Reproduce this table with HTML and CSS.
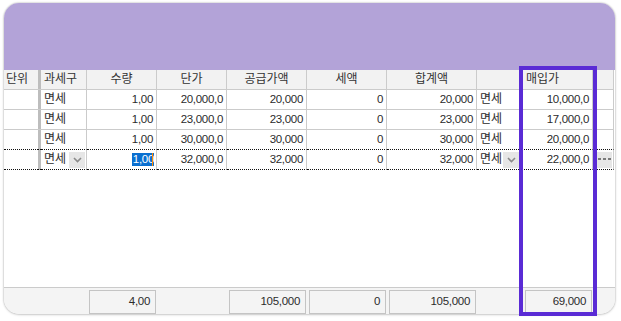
FILE: index.html
```html
<!DOCTYPE html>
<html lang="ko">
<head>
<meta charset="utf-8">
<link rel="stylesheet" href="styles.css">
</head>
<body>
<div class="card">
  <div class="banner"></div>
  <div class="grid">
    <div class="row head">
      <div class="c c1 left">단위</div><div class="frz"></div>
      <div class="c c2 left">과세구</div>
      <div class="c c3">수량</div>
      <div class="c c4">단가</div>
      <div class="c c5">공급가액</div>
      <div class="c c6">세액</div>
      <div class="c c7">합계액</div>
      <div class="c c8"></div>
      <div class="c c9 left">매입가</div>
      <div class="c c10"></div>
    </div>
    <div class="row">
      <div class="c c1"></div><div class="frz"></div>
      <div class="c c2 left">면세</div>
      <div class="c c3 num">1,00</div>
      <div class="c c4 num">20,000,0</div>
      <div class="c c5 num">20,000</div>
      <div class="c c6 num">0</div>
      <div class="c c7 num">20,000</div>
      <div class="c c8 left">면세</div>
      <div class="c c9 num">10,000,0</div>
      <div class="c c10"></div>
    </div>
    <div class="row">
      <div class="c c1"></div><div class="frz"></div>
      <div class="c c2 left">면세</div>
      <div class="c c3 num">1,00</div>
      <div class="c c4 num">23,000,0</div>
      <div class="c c5 num">23,000</div>
      <div class="c c6 num">0</div>
      <div class="c c7 num">23,000</div>
      <div class="c c8 left">면세</div>
      <div class="c c9 num">17,000,0</div>
      <div class="c c10"></div>
    </div>
    <div class="row prev">
      <div class="c c1"></div><div class="frz"></div>
      <div class="c c2 left">면세</div>
      <div class="c c3 num">1,00</div>
      <div class="c c4 num">30,000,0</div>
      <div class="c c5 num">30,000</div>
      <div class="c c6 num">0</div>
      <div class="c c7 num">30,000</div>
      <div class="c c8 left">면세</div>
      <div class="c c9 num">20,000,0</div>
      <div class="c c10"></div>
    </div>
    <div class="row cur">
      <div class="c c1"></div><div class="frz"></div>
      <div class="c c2 left combo"><span>면세</span><span class="dd"><svg width="9" height="6" viewBox="0 0 9 6"><polyline points="1,1 4.5,4.5 8,1" fill="none" stroke="#8a8a8a" stroke-width="1.6"/></svg></span></div>
      <div class="c c3 num"><span class="sel">1,00</span><span class="caret"></span></div>
      <div class="c c4 num">32,000,0</div>
      <div class="c c5 num">32,000</div>
      <div class="c c6 num">0</div>
      <div class="c c7 num">32,000</div>
      <div class="c c8 left combo"><span>면세</span><span class="dd"><svg width="9" height="6" viewBox="0 0 9 6"><polyline points="1,1 4.5,4.5 8,1" fill="none" stroke="#8a8a8a" stroke-width="1.6"/></svg></span></div>
      <div class="c c9 num">22,000,0</div>
      <div class="c c10"><span class="more"><svg width="13" height="3" viewBox="0 0 13 3"><rect x="0" y="0" width="3" height="2" fill="#7a7a7a"/><rect x="5" y="0" width="3" height="2" fill="#7a7a7a"/><rect x="10" y="0" width="3" height="2" fill="#7a7a7a"/></svg></span></div>
    </div>
    <div class="empty"></div>
    <div class="row foot">
      <div class="f c1"></div><div class="ffrz"></div>
      <div class="f c2"></div>
      <div class="f c3"><span class="box">4,00</span></div>
      <div class="f c4"></div>
      <div class="f c5"><span class="box">105,000</span></div>
      <div class="f c6"><span class="box">0</span></div>
      <div class="f c7"><span class="box">105,000</span></div>
      <div class="f c8"></div>
      <div class="f c9 wide"><span class="box">69,000</span></div>
      <div class="f c10"></div>
    </div>
  </div>
</div>
<div class="highlight"></div>
</body>
</html>
```

FILE: styles.css
```css
html, body {
  margin: 0;
  padding: 0;
  background: #ffffff;
}
body {
  width: 621px;
  height: 321px;
  position: relative;
  font-family: "Liberation Sans", "Noto Sans CJK KR", sans-serif;
  font-size: 12px;
  color: #2b2b2b;
}
.card {
  position: absolute;
  left: 4px;
  top: 3px;
  width: 611px;
  height: 311px;
  border-radius: 15px;
  background: #ffffff;
  overflow: hidden;
  box-shadow: 0 0 2px rgba(0,0,0,0.35), 0 1px 3px rgba(0,0,0,0.12);
  display: flex;
  flex-direction: column;
}
.banner {
  height: 67px;
  background: #b3a3d8;
  flex: none;
}
.grid {
  flex: 1;
  display: flex;
  flex-direction: column;
}
.row {
  display: flex;
  height: 20px;
  flex: none;
}
.c {
  box-sizing: border-box;
  height: 20px;
  border-right: 1px solid #cbcbcb;
  border-bottom: 1px solid #cbcbcb;
  display: flex;
  align-items: center;
  justify-content: flex-end;
  padding: 0 3px 0 3px;
  white-space: nowrap;
  overflow: hidden;
  line-height: 19px;
}
.c1 { width: 34px; flex: none; }
.frz { width: 3px; flex: none; background: #bdbdbd; box-sizing: border-box; border-bottom: 1px solid #cbcbcb; }
.c2 { width: 46px; flex: none; }
.c3 { width: 70px; flex: none; }
.c4 { width: 70px; flex: none; }
.c5 { width: 80px; flex: none; }
.c6 { width: 80px; flex: none; }
.c7 { width: 90px; flex: none; }
.c8 { width: 44px; flex: none; }
.c9 { width: 72px; flex: none; }
.c10 { width: 21px; flex: none; }
.row .c1 { border-right: none; }

.head .c {
  background: #f2f2f2;
  justify-content: center;
  color: #333;
}
.head .c.left { justify-content: flex-start; }
.head .c1 { padding-left: 2px; }
.head .c9 { padding-left: 5px; }

.left { justify-content: flex-start; }
.num { font-size: 11.5px; letter-spacing: -0.3px; }

.prev .c, .prev .frz { border-bottom: 1px dotted #111; }
.cur .c, .cur .frz { border-bottom: 1px dotted #111; }

.combo { padding-right: 1px; justify-content: space-between; }
.dd {
  width: 16px;
  height: 16px;
  background: #e6e6e6;
  display: flex;
  align-items: center;
  justify-content: center;
}
.sel {
  background: #0a6fd0;
  color: #ffffff;
  line-height: 13px;
  height: 13px;
  padding: 0 0 0 1px;
}
.caret {
  width: 1px;
  height: 13px;
  background: #ff8a00;
  margin-left: -2px;
}
.cur .c3 { padding-right: 3px; }
.cur .c10 { padding: 0; justify-content: flex-start; }
.more {
  width: 16px;
  height: 16px;
  margin-left: 3px;
  background: #e6e6e6;
  display: flex;
  align-items: center;
  justify-content: center;
}

.empty { flex: 1; }

.foot {
  height: 26px;
  background: #f4f4f4;
  border-top: 1px solid #cbcbcb;
  flex: none;
}
.f {
  box-sizing: border-box;
  height: 26px;
  padding: 2px 1px 0 2px;
  display: flex;
}
.f.wide { padding-left: 4px; }
.ffrz { width: 3px; flex: none; }
.box {
  flex: 1;
  box-sizing: border-box;
  border: 1px solid #c4c4c4;
  text-align: right;
  padding: 0 5px 0 0;
  line-height: 21px;
  font-size: 11.5px;
  letter-spacing: -0.3px;
  color: #2b2b2b;
}

.highlight {
  position: absolute;
  left: 519px;
  top: 66px;
  width: 78px;
  height: 250px;
  box-sizing: border-box;
  border: 4px solid #5a2bd5;
}
```
